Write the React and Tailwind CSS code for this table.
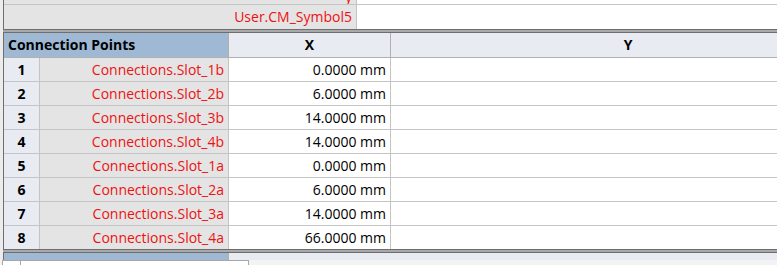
import React from 'react'

const points = [
  { n: 1, name: 'Connections.Slot_1b', x: '0.0000 mm' },
  { n: 2, name: 'Connections.Slot_2b', x: '6.0000 mm' },
  { n: 3, name: 'Connections.Slot_3b', x: '14.0000 mm' },
  { n: 4, name: 'Connections.Slot_4b', x: '14.0000 mm' },
  { n: 5, name: 'Connections.Slot_1a', x: '0.0000 mm' },
  { n: 6, name: 'Connections.Slot_2a', x: '6.0000 mm' },
  { n: 7, name: 'Connections.Slot_3a', x: '14.0000 mm' },
  { n: 8, name: 'Connections.Slot_4a', x: '66.0000 mm' },
]

function App() {
  return (
    <div
      className="relative w-[777px] h-[265px] overflow-hidden bg-[#ececec] pl-[3px] text-[14px] leading-none"
      style={{ fontFamily: '"Open Sans", "Noto Sans", sans-serif' }}
    >
      <div className="w-[900px]">
        {/* Symbol table (scrolled, only the last rows show) */}
        <div className="border-l border-b border-[#6e6e6e]">
          <div className="flex h-[5px] overflow-hidden border-b border-[#c4c4c4]">
            <div className="w-[353px] shrink-0 bg-[#e4e4e4] border-r border-[#c4c4c4] flex items-end justify-end pr-[4px] text-[#ee1111]">
              <span className="leading-[23px] -mb-[4px]">y</span>
            </div>
            <div className="flex-1 bg-white" />
          </div>
          <div className="flex h-[24px]">
            <div className="w-[353px] shrink-0 bg-[#e4e4e4] border-r border-[#c4c4c4] flex items-center justify-end pr-[4px] text-[#ee1111]">
              User.CM_Symbol5
            </div>
            <div className="flex-1 bg-white" />
          </div>
        </div>

        <div className="h-[2px] bg-[#a9a9a9]" />

        {/* Connection points table */}
        <div className="border-l border-t border-b border-[#6e6e6e]">
          <div className="flex h-[25px] border-b border-[#b0b0b0]">
            <div className="w-[225px] shrink-0 bg-[#9fb9d5] border-r border-[#b0b0b0] flex items-center pl-[4px] font-bold text-black">
              Connection Points
            </div>
            <div className="w-[162px] shrink-0 bg-[#e8ebf1] border-r border-[#b0b0b0] flex items-center justify-center font-bold text-black">
              X
            </div>
            <div className="w-[474px] shrink-0 bg-[#e8ebf1] flex items-center justify-center font-bold text-black">
              Y
            </div>
          </div>
          {points.map((p, i) => (
            <div
              key={p.n}
              className={`flex ${i < points.length - 1 ? 'h-[24px] border-b border-[#c4c4c4]' : 'h-[23px]'}`}
            >
              <div className="w-[36px] shrink-0 bg-[#e8ebf1] border-r border-[#c4c4c4] flex items-center justify-center font-bold text-black">
                {p.n}
              </div>
              <div className="w-[189px] shrink-0 bg-[#e4e4e4] border-r border-[#c4c4c4] flex items-center justify-end pr-[4px] text-[#ee1111]">
                {p.name}
              </div>
              <div className="w-[162px] shrink-0 bg-white border-r border-[#c4c4c4] flex items-center justify-end pr-[4px] text-black">
                {p.x}
              </div>
              <div className="w-[474px] shrink-0 bg-white" />
            </div>
          ))}
        </div>

        <div className="h-[2px] bg-[#a9a9a9]" />

        {/* Next table header, mostly hidden */}
        <div className="border-l border-t border-[#6e6e6e]">
          <div className="flex h-[25px]">
            <div className="w-[225px] shrink-0 bg-[#9fb9d5] border-r border-[#b0b0b0] flex items-center pl-[4px] font-bold text-black">
              Anchor Points
            </div>
            <div className="w-[674px] shrink-0 bg-[#e8ebf1] flex items-center justify-center font-bold text-black">
              Attach
            </div>
          </div>
        </div>
      </div>

      {/* Strip and edit box lying over the bottom */}
      <div className="absolute left-0 right-0 top-[260px] h-[5px] bg-[#f3f3f3]" />
      <div className="absolute left-[2px] top-[260px] w-[247px] h-[12px] bg-white border border-[#a8a8a8] flex">
        <div className="w-[18px] border-r border-[#a8a8a8]" />
      </div>
    </div>
  )
}

export default App
